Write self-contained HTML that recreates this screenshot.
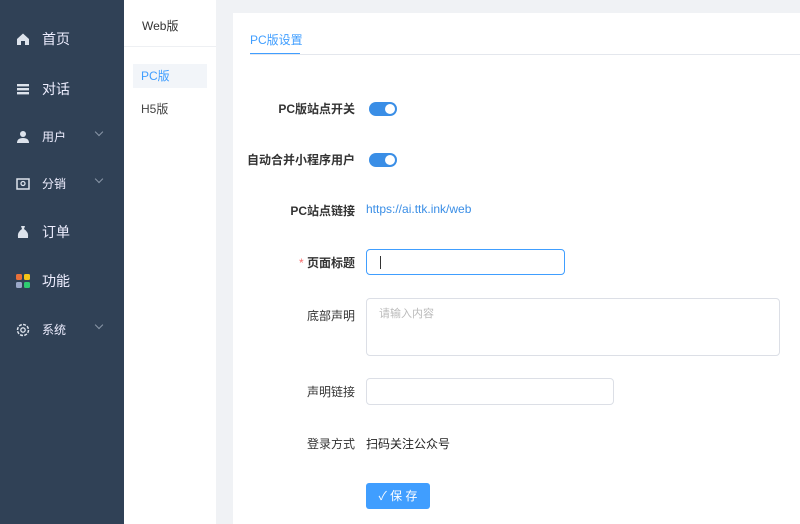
<!DOCTYPE html>
<html><head><meta charset="utf-8"><style>
*{margin:0;padding:0;box-sizing:border-box}
body{width:800px;height:524px;overflow:hidden;background:#f0f2f5;font-family:"Liberation Sans","Noto Sans CJK SC",sans-serif;position:relative}
.side{position:absolute;left:0;top:0;width:124px;height:524px;background:#304156;color:#fff}
.mi{position:absolute;left:16px;display:flex;align-items:center;font-size:14px;color:#eef}
.mi.s{font-size:12px}
.ic{width:14px;height:14px;margin-right:12px;display:inline-block}
.ar{position:absolute;left:96px;width:6px;height:6px;border-right:1px solid #8a97a8;border-bottom:1px solid #8a97a8;transform:rotate(45deg)}
.sub{position:absolute;left:124px;top:0;width:92px;height:524px;background:#fff}
.card{position:absolute;left:233px;top:13px;width:567px;height:511px;background:#fff}
.lab{position:absolute;right:445px;font-size:12px;color:#333;font-weight:bold;white-space:nowrap}
.lab.n{font-weight:normal}
.sw{position:absolute;left:136px;width:28px;height:14px;border-radius:7px;background:#3a8ee6}
.sw:after{content:"";position:absolute;right:2px;top:2px;width:10px;height:10px;border-radius:50%;background:#fff}
.inp{position:absolute;left:133px;border:1px solid #dcdfe6;border-radius:4px;background:#fff}
</style></head><body>
<div class="side">
 <div class="mi" style="top:29px"><svg class="ic" viewBox="0 0 14 14"><path d="M1 7L7 1.5 13 7V13H9V9H5V13H1Z" fill="#dde3ec"/></svg>首页</div>
 <div class="mi" style="top:79px"><svg class="ic" viewBox="0 0 14 14"><rect x="1" y="2" width="12" height="2.4" fill="#dde3ec"/><rect x="1" y="6" width="12" height="2.4" fill="#dde3ec"/><rect x="1" y="10" width="12" height="2.4" fill="#dde3ec"/></svg>对话</div>
 <div class="mi s" style="top:128px"><svg class="ic" viewBox="0 0 14 14"><circle cx="7" cy="4" r="3" fill="#dde3ec"/><path d="M1 13Q1 8 7 8 13 8 13 13Z" fill="#dde3ec"/></svg>用户</div><div class="ar" style="top:129px"></div>
 <div class="mi s" style="top:175px"><svg class="ic" viewBox="0 0 14 14"><rect x="1" y="2" width="12" height="10" fill="none" stroke="#dde3ec" stroke-width="1.5"/><circle cx="7" cy="6.5" r="2" fill="none" stroke="#dde3ec" stroke-width="1.3"/></svg>分销</div><div class="ar" style="top:176px"></div>
 <div class="mi" style="top:222px"><svg class="ic" viewBox="0 0 14 14"><path d="M5 1H9L8 4Q13 7 12 13H2Q1 7 6 4Z" fill="#dde3ec"/></svg>订单</div>
 <div class="mi" style="top:271px"><svg class="ic" viewBox="0 0 14 14"><rect x="0" y="0" width="6" height="6" rx="1.5" fill="#e8703a"/><rect x="8" y="0" width="6" height="6" rx="1.5" fill="#f5c518"/><rect x="0" y="8" width="6" height="6" rx="1.5" fill="#9aa8c8"/><rect x="8" y="8" width="6" height="6" rx="1.5" fill="#2ecc71"/></svg>功能</div>
 <div class="mi s" style="top:321px"><svg class="ic" viewBox="0 0 14 14"><circle cx="7" cy="7" r="5.5" fill="none" stroke="#dde3ec" stroke-width="1.5" stroke-dasharray="3 1.3"/><circle cx="7" cy="7" r="2.2" fill="none" stroke="#dde3ec" stroke-width="1.3"/></svg>系统</div><div class="ar" style="top:322px"></div>
</div>
<div class="sub">
 <div style="position:absolute;left:18px;top:17px;font-size:12px;color:#333">Web版</div>
 <div style="position:absolute;left:0;top:46px;width:92px;height:1px;background:#eef0f3"></div>
 <div style="position:absolute;left:9px;top:64px;width:74px;height:24px;background:#f2f5f9"></div>
 <div style="position:absolute;left:17px;top:67px;font-size:12px;color:#409eff">PC版</div>
 <div style="position:absolute;left:17px;top:100px;font-size:12px;color:#444">H5版</div>
</div>
<div class="card">
 <div style="position:absolute;left:17px;top:18px;font-size:12px;color:#409eff">PC版设置</div>
 <div style="position:absolute;left:17px;top:40px;width:50px;height:2px;background:#409eff"></div>
 <div style="position:absolute;left:17px;top:41px;width:550px;height:1px;background:#e4e7ed"></div>
 <div class="lab" style="top:87px">PC版站点开关</div><div class="sw" style="top:89px"></div>
 <div class="lab" style="top:138px">自动合并小程序用户</div><div class="sw" style="top:140px"></div>
 <div class="lab" style="top:189px">PC站点链接</div>
 <div style="position:absolute;left:133px;top:189px;font-size:12px;color:#3a8ee6">https://ai.ttk.ink/web</div>
 <div class="lab" style="top:241px"><span style="color:#f56c6c;font-weight:normal">*</span> 页面标题</div>
 <div class="inp" style="top:236px;width:199px;height:26px;border-color:#409eff"><div style="position:absolute;left:13px;top:6px;width:1px;height:13px;background:#333"></div></div>
 <div class="lab n" style="top:294px">底部声明</div>
 <div class="inp" style="top:285px;width:414px;height:58px"><div style="position:absolute;left:12px;top:6px;font-size:11px;color:#bbb">请输入内容</div></div>
 <div class="lab n" style="top:370px">声明链接</div>
 <div class="inp" style="top:365px;width:248px;height:27px"></div>
 <div class="lab n" style="top:422px">登录方式</div>
 <div style="position:absolute;left:133px;top:422px;font-size:12px;color:#222">扫码关注公众号</div>
 <div style="position:absolute;left:133px;top:470px;width:64px;height:26px;background:#409eff;border-radius:3px;color:#fff;font-size:12px;text-align:center;line-height:26px">✓ 保 存</div>
</div>
</body></html>
